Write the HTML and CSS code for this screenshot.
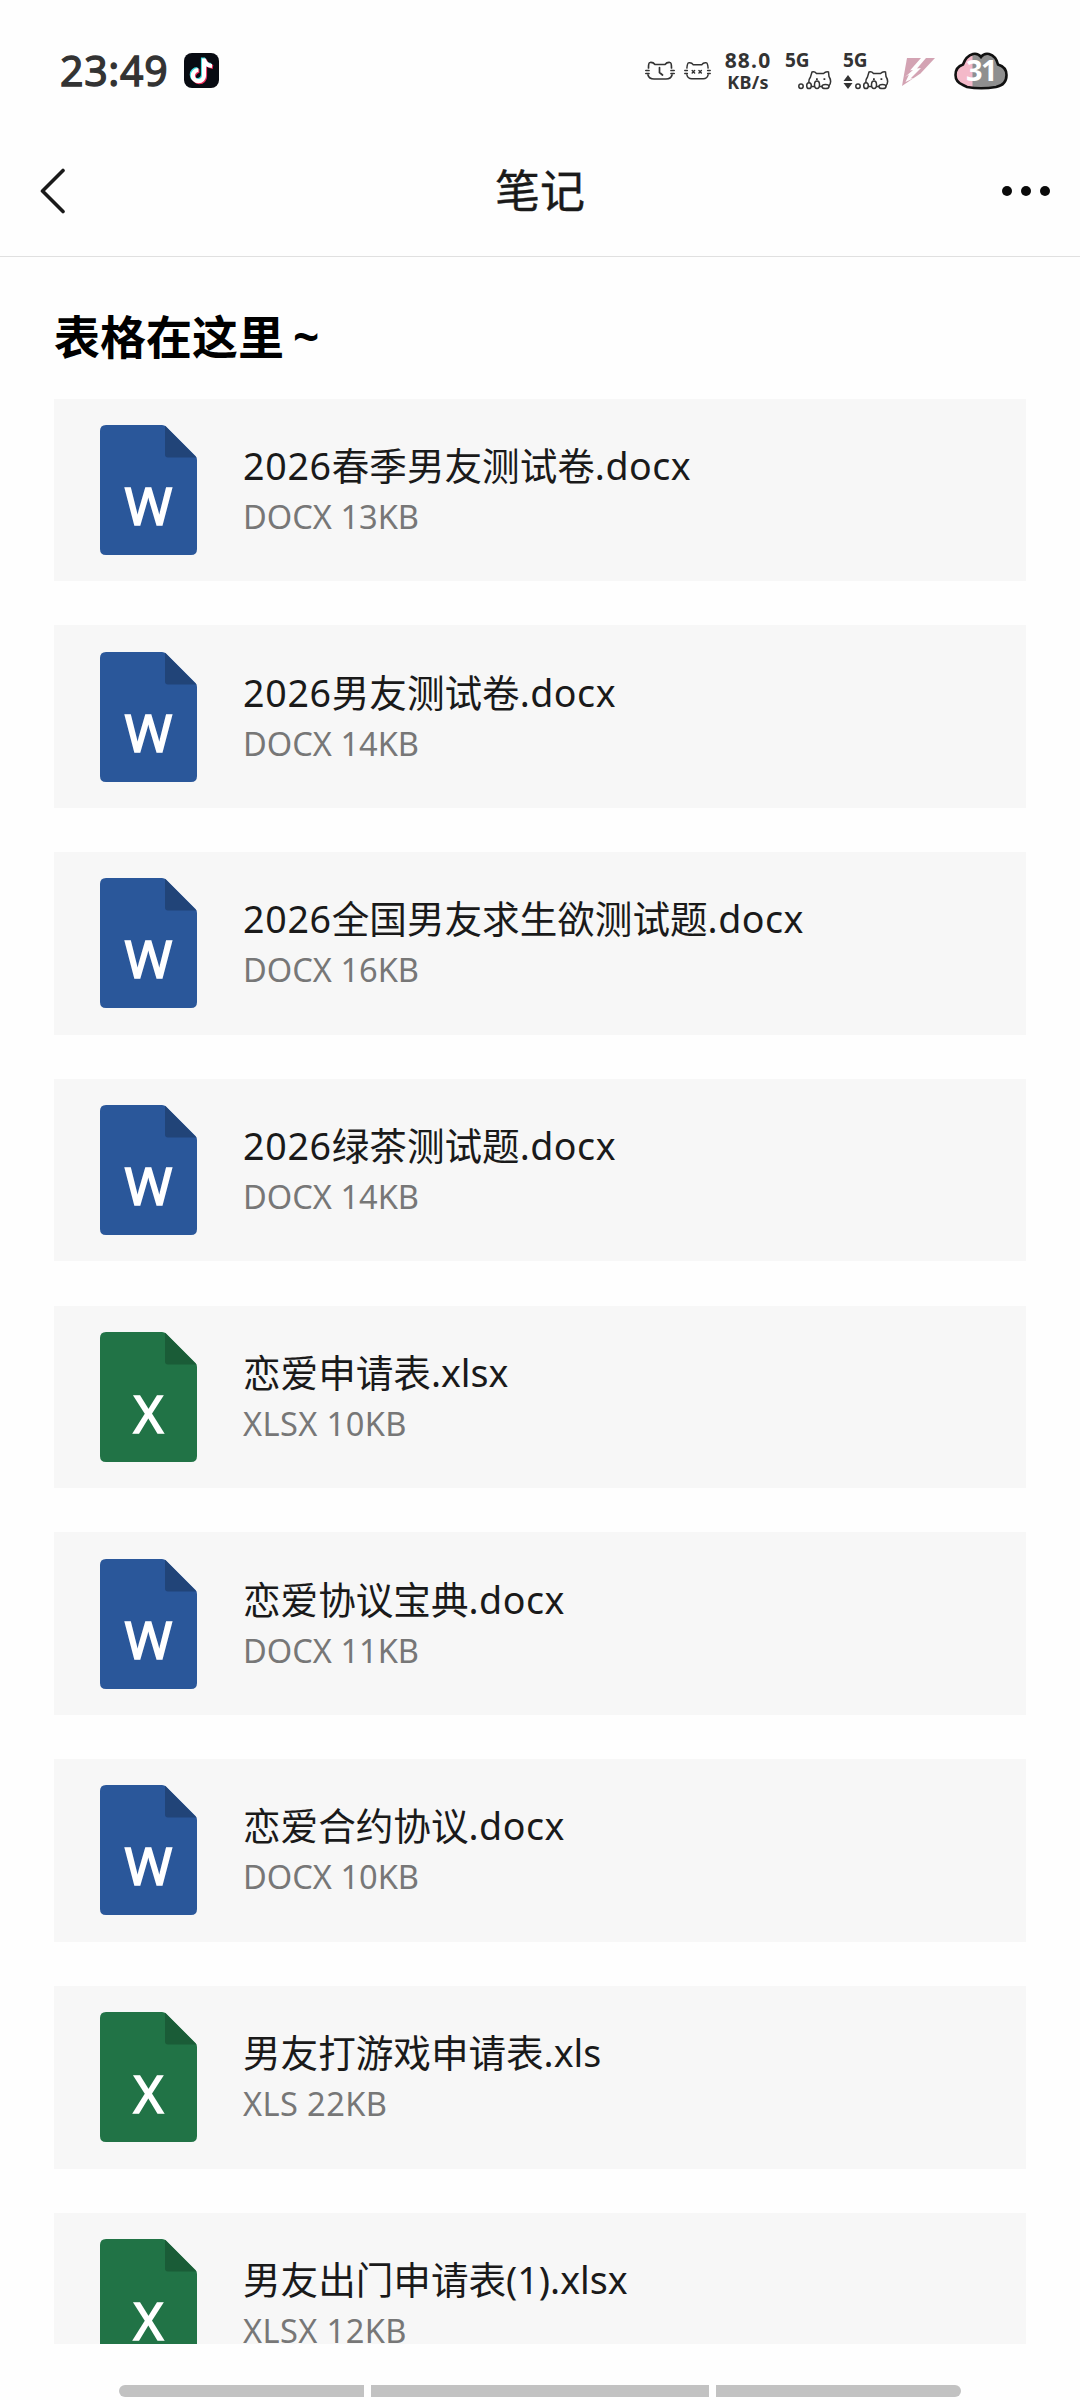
FILE: index.html
```html
<!DOCTYPE html>
<html lang="zh-CN">
<head>
<meta charset="utf-8">
<title>笔记</title>
<link rel="stylesheet" href="styles.css">
</head>
<body>
<svg class="defs" aria-hidden="true">
  <symbol id="doc" viewBox="0 0 97 130">
    <path d="M6 0H62Q64.500 0 66 1.500L95.500 31Q97 32.500 97 35V124Q97 130 91 130H6Q0 130 0 124V6Q0 0 6 0Z" fill="#2a579a"/>
    <path d="M65 .7L96.500 32.500H68Q65 32.500 65 29.500Z" fill="#214478"/>
  </symbol>
  <symbol id="sheet" viewBox="0 0 97 130">
    <path d="M6 0H62Q64.500 0 66 1.500L95.500 31Q97 32.500 97 35V124Q97 130 91 130H6Q0 130 0 124V6Q0 0 6 0Z" fill="#217346"/>
    <path d="M65 .7L96.500 32.500H68Q65 32.500 65 29.500Z" fill="#1a5c37"/>
  </symbol>
  <symbol id="signal" viewBox="0 0 34 20">
    <g fill="#fefefe" stroke="#333" stroke-width="1.500">
      <path d="M12 16Q9.500 11 12.500 7L14 2Q16.500 1 18.500 3.500H25.500Q28 1 30.500 2L31 6.500Q34.500 12 30.500 16.500H14Z"/>
      <circle cx="3" cy="16.300" r="2.200"/>
      <ellipse cx="11" cy="15.700" rx="2.300" ry="2.900"/>
      <ellipse cx="19" cy="14.800" rx="2.500" ry="3.700"/>
      <ellipse cx="27.500" cy="16.500" rx="3.500" ry="2.100"/>
    </g>
    <path d="M18 8.300h1.800v1.800H18zM25.500 8.300h1.800v1.800h-1.800z" fill="#333"/>
  </symbol>
</svg>

<header class="status">
  <span class="clock">23:49</span>
  <svg class="tiktok" viewBox="0 0 35 35">
    <rect width="35" height="35" rx="8" fill="#080b12"/>
    <g fill="none" stroke-width="4.200">
      <path d="M19 4.500V21.500A5.600 5.600 0 1 1 13.400 16M19 5.500Q20.500 11.500 27 12" stroke="#38d8df"/>
      <path d="M21 6.500V23.500A5.600 5.600 0 1 1 15.400 18M21 7.500Q22.500 13 29 14" stroke="#ee2f5a"/>
      <path d="M20 5.500V22.500A5.600 5.600 0 1 1 14.400 17M20 6.500Q21.500 12.500 28 13" stroke="#fff"/>
    </g>
  </svg>
  <div class="tray">
    <svg class="cat-clock" viewBox="0 0 30 20" fill="none" stroke="#333" stroke-width="1.700" stroke-linecap="round">
      <path d="M3.500 7Q3.500 1.500 5 1.500Q8 1 10 3.500H20Q22 1 25 1.500Q26.500 1.500 26.500 7M3 14Q4 18 9 18H21Q26 18 27 14M.8 9.500H4M.8 12.500H4M26 9.500H29.200M26 12.500H29.200M14.500 6.500V11.500L17.500 14"/>
    </svg>
    <svg class="cat-sleep" viewBox="0 0 28 20" fill="none" stroke="#333" stroke-width="1.500" stroke-linecap="round">
      <path d="M3 7Q3.500 1.500 5 1.500Q8 1 9.500 3.500H18.500Q20 1 23 1.500Q24.500 1.500 25 7M3 14Q4 18 8 18H20Q24 18 25 14M.8 9.500H3.500M.8 12.500H3.500M24.500 9.500H27.200M24.500 12.500H27.200M8.500 9.500L11 12M11 9.500L8.500 12M15.500 9.500L18 12M18 9.500L15.500 12"/>
    </svg>
    <div class="speed"><span class="rate">88.0</span><span class="unit">KB/s</span></div>
    <div class="sim sim-one">
      <span class="net">5G</span>
      <svg class="signal"><use href="#signal"/></svg>
    </div>
    <div class="sim sim-two">
      <span class="net">5G</span>
      <svg class="arrows" viewBox="0 0 10 14"><path d="M5 0L9.500 6H.5ZM5 14L.5 8H9.500Z" fill="#333"/></svg>
      <svg class="signal"><use href="#signal"/></svg>
    </div>
    <svg class="bolt" viewBox="0 0 33 28">
      <path d="M5 0H33L18.500 15.500L0 28Z" fill="#d3a3b3"/>
      <path d="M19 0H24L15 10.500L19 10L8.500 20.500L12 20L3.500 24L7 16.500L3 19L11 12L8 12.500Z" fill="#fefefe"/>
    </svg>
    <svg class="battery" viewBox="0 0 54 38">
      <clipPath id="level"><rect width="18.500" height="38"/></clipPath>
      <path d="M9 33Q1.500 30 1.500 23Q1.500 15 9 12.500Q12 4 19 2Q24 1 27 5Q30 1 35 2Q42 4 44 12.500Q52.500 15 52.500 23Q52.500 33 42 35Q27 37.500 13 35Z" fill="#8f8f8f"/>
      <path d="M9 33Q1.500 30 1.500 23Q1.500 15 9 12.500Q12 4 19 2V35H13Z" fill="#f4b9c9" clip-path="url(#level)"/>
      <path d="M9 33Q1.500 30 1.500 23Q1.500 15 9 12.500Q12 4 19 2Q24 1 27 5Q30 1 35 2Q42 4 44 12.500Q52.500 15 52.500 23Q52.500 33 42 35Q27 37.500 13 35Z" fill="none" stroke="#111" stroke-width="2.600"/>
      <text x="27" y="28.500" text-anchor="middle" class="battery-text">31</text>
    </svg>
  </div>
</header>

<nav class="bar">
  <svg class="back" viewBox="0 0 26 46"><path d="M23 2.500L2.500 23L23 43.500" fill="none" stroke="#1a1a1a" stroke-width="3.600" stroke-linecap="round" stroke-linejoin="round"/></svg>
  <h1 class="title">笔记</h1>
  <div class="more"><i></i><i></i><i></i></div>
</nav>

<main class="note">
  <h2 class="heading">表格在这里<span class="tilde">~</span></h2>
  <div class="files">
    <article class="file"><svg class="icon"><use href="#doc"/><text x="48.500" y="100" class="letter">W</text></svg><div class="info"><p class="name"><span class="num">2026</span>春季男友测试卷<span class="ext">.docx</span></p><p class="meta">DOCX 13KB</p></div></article>
    <article class="file"><svg class="icon"><use href="#doc"/><text x="48.500" y="100" class="letter">W</text></svg><div class="info"><p class="name"><span class="num">2026</span>男友测试卷<span class="ext">.docx</span></p><p class="meta">DOCX 14KB</p></div></article>
    <article class="file"><svg class="icon"><use href="#doc"/><text x="48.500" y="100" class="letter">W</text></svg><div class="info"><p class="name"><span class="num">2026</span>全国男友求生欲测试题<span class="ext">.docx</span></p><p class="meta">DOCX 16KB</p></div></article>
    <article class="file"><svg class="icon"><use href="#doc"/><text x="48.500" y="100" class="letter">W</text></svg><div class="info"><p class="name"><span class="num">2026</span>绿茶测试题<span class="ext">.docx</span></p><p class="meta">DOCX 14KB</p></div></article>
    <article class="file"><svg class="icon"><use href="#sheet"/><text x="48.500" y="101" class="letter">X</text></svg><div class="info"><p class="name">恋爱申请表.xlsx</p><p class="meta wide">XLSX 10KB</p></div></article>
    <article class="file"><svg class="icon"><use href="#doc"/><text x="48.500" y="100" class="letter">W</text></svg><div class="info"><p class="name">恋爱协议宝典<span class="ext">.docx</span></p><p class="meta">DOCX 11KB</p></div></article>
    <article class="file"><svg class="icon"><use href="#doc"/><text x="48.500" y="100" class="letter">W</text></svg><div class="info"><p class="name">恋爱合约协议<span class="ext">.docx</span></p><p class="meta">DOCX 10KB</p></div></article>
    <article class="file"><svg class="icon"><use href="#sheet"/><text x="48.500" y="101" class="letter">X</text></svg><div class="info"><p class="name">男友打游戏申请表.xls</p><p class="meta wide">XLS 22KB</p></div></article>
    <article class="file"><svg class="icon"><use href="#sheet"/><text x="48.500" y="101" class="letter">X</text></svg><div class="info"><p class="name">男友出门申请表(1).xlsx</p><p class="meta wide">XLSX 12KB</p></div></article>
  </div>
</main>

<footer class="gesture"><i class="seg left"></i><i class="seg mid"></i><i class="seg right"></i></footer>
</body>
</html>
```
FILE: styles.css
```css
* { box-sizing: border-box; margin: 0; padding: 0; }
body {
  width: 1080px;
  height: 2400px;
  overflow: hidden;
  display: flex;
  flex-direction: column;
  background: #fefefe;
  font-family: "Noto Sans", "Noto Sans CJK SC", sans-serif;
  color: #1a1a1a;
}
svg { display: block; flex: none; }
.defs { position: absolute; width: 0; height: 0; }

.status {
  flex: none;
  height: 126px;
  padding: 0 72px 0 60px;
  display: flex;
  align-items: flex-start;
  color: #333;
}
.clock { width: 124px; padding-top: 43px; font-size: 41px; line-height: 54px; letter-spacing: .7px; -webkit-text-stroke: 1.3px #333; }
.tiktok { width: 35px; height: 35px; margin-top: 53px; }
.tray { margin-left: auto; display: flex; align-items: flex-start; }
.cat-clock { width: 30px; height: 20px; margin: 61px 9px 0 0; }
.cat-sleep { width: 27px; height: 20px; margin: 61px 12px 0 0; }
.speed { width: 50px; margin-right: 12px; padding-top: 48px; display: flex; flex-direction: column; align-items: center; font-weight: 700; }
.rate { font-size: 21px; line-height: 24px; letter-spacing: 1.2px; }
.unit { font-size: 18px; line-height: 21px; letter-spacing: .3px; }
.sim { height: 90px; padding-top: 50px; display: grid; grid-template-rows: 20px 20px; }
.net { font-size: 19px; line-height: 20px; font-weight: 700; }
.sim-one { width: 47px; margin-right: 11px; grid-template-columns: 13px 34px; }
.sim-one .net { grid-column: 1 / 3; }
.sim-one .signal { grid-column: 2; }
.sim-two { width: 48px; margin-right: 11px; grid-template-columns: 12px 36px; }
.sim-two .net { grid-column: 1 / 3; }
.signal { width: 34px; height: 20px; }
.arrows { width: 10px; height: 14px; margin-top: 5px; }
.bolt { width: 33px; height: 28px; margin: 58px 19px 0 0; }
.battery { width: 54px; height: 38px; margin-top: 52px; }
.battery-text { font-size: 29px; font-weight: 700; fill: #fff; letter-spacing: -1.5px; }

.bar {
  flex: none;
  height: 131px;
  padding: 0 30px 0 40px;
  display: grid;
  grid-template-columns: 100px 1fr 110px;
  align-items: center;
  border-bottom: 1px solid #e0e0e0;
}
.back { width: 26px; height: 46px; }
.title { text-align: center; font-size: 45px; line-height: 60px; font-weight: 400; -webkit-text-stroke: .4px #1a1a1a; }
.more { display: flex; justify-content: flex-end; gap: 9px; }
.more i { width: 10px; height: 10px; border-radius: 50%; background: #0a0a0a; }

.note { flex: none; height: 2087px; padding: 49px 54px 0; overflow: hidden; }
.heading { height: 92.5px; font-size: 46px; line-height: 60px; font-weight: 700; color: #000; }
.tilde { margin-left: 9px; }
.files { display: flex; flex-direction: column; gap: 44.2px; }
.file { flex: none; height: 182.6px; padding-left: 46px; display: flex; align-items: center; background: #f7f7f7; }
.icon { width: 97px; height: 130px; margin-right: 46px; }
.letter { font-size: 51px; fill: #fff; stroke: #fff; stroke-width: 1.6px; text-anchor: middle; }
.info { padding-top: 3px; }
.name { height: 51px; font-size: 37.6px; line-height: 50px; white-space: nowrap; }
.num { letter-spacing: .7px; }
.ext { letter-spacing: .5px; }
.meta { font-size: 32.6px; line-height: 50px; color: #777; }
.wide { letter-spacing: .4px; }

.gesture { flex: none; height: 56px; padding: 41px 119px 0; display: flex; gap: 7px; }
.seg { height: 12px; background: #c2c2c2; }
.left { width: 245px; border-radius: 6px 0 0 6px; }
.mid { width: 338px; }
.right { width: 245px; border-radius: 0 6px 6px 0; }
```
